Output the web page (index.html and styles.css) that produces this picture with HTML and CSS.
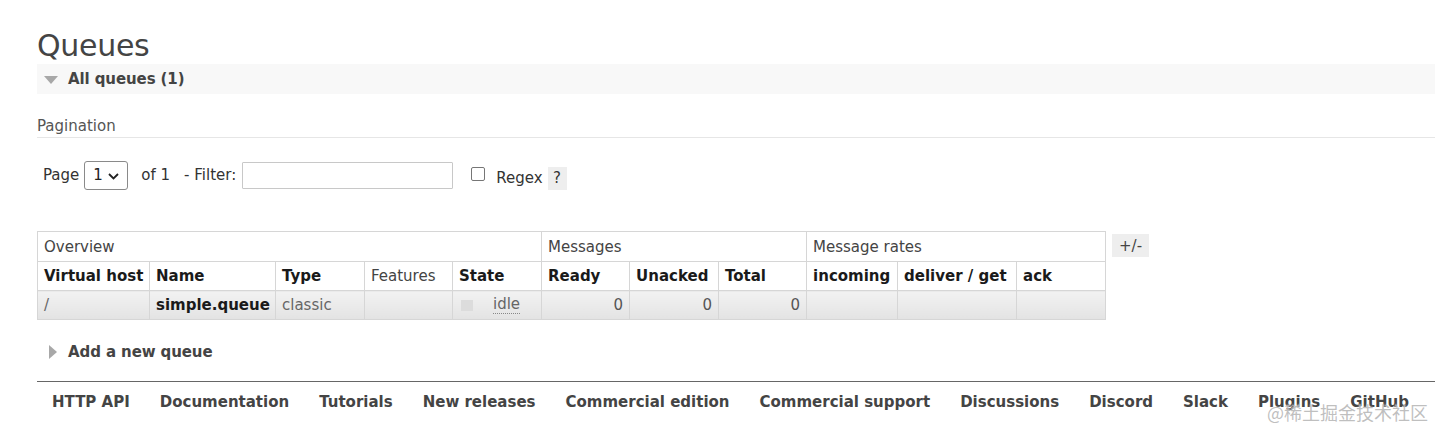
FILE: index.html
```html
<!DOCTYPE html>
<html>
<head>
<meta charset="utf-8">
<link rel="stylesheet" href="styles.css">
</head>
<body>
<div class="main">
  <h1 class="title">Queues</h1>
  <div class="section-bar">
    <span class="tri-down"></span>
    <h2 class="section-title">All queues (1)</h2>
  </div>

  <h3 class="sub-title">Pagination</h3>
  <div class="pager">
    <span class="lbl">Page</span>
    <span class="select-wrap">
      <select class="page-select"><option>1</option></select>
      <svg class="chev" width="11" height="7" viewBox="0 0 11 7"><path d="M1 1 L5.5 5.5 L10 1" fill="none" stroke="#222" stroke-width="1.8"/></svg>
    </span>
    <span class="of">of 1</span>
    <span class="flt">- Filter:</span>
    <input class="filter" type="text">
    <input class="chk" type="checkbox">
    <span class="regex">Regex</span>
    <span class="help">?</span>
  </div>

  <div class="table-row">
    <table class="list">
      <colgroup>
        <col class="c-vh"><col class="c-name"><col class="c-type"><col class="c-feat"><col class="c-state">
        <col class="c-ready"><col class="c-unack"><col class="c-total">
        <col class="c-inc"><col class="c-del"><col class="c-ack">
      </colgroup>
      <thead>
        <tr class="group">
          <th colspan="5">Overview</th>
          <th colspan="3">Messages</th>
          <th colspan="3">Message rates</th>
        </tr>
        <tr class="heads">
          <th class="b">Virtual host</th>
          <th class="b">Name</th>
          <th class="b">Type</th>
          <th>Features</th>
          <th class="b">State</th>
          <th class="b">Ready</th>
          <th class="b">Unacked</th>
          <th class="b">Total</th>
          <th class="b">incoming</th>
          <th class="b">deliver / get</th>
          <th class="b">ack</th>
        </tr>
      </thead>
      <tbody>
        <tr class="alt">
          <td>/</td>
          <td class="qname">simple.queue</td>
          <td>classic</td>
          <td></td>
          <td><span class="state"><span class="sq"></span><abbr class="idle">idle</abbr></span></td>
          <td class="num">0</td>
          <td class="num">0</td>
          <td class="num">0</td>
          <td></td>
          <td></td>
          <td></td>
        </tr>
      </tbody>
    </table>
    <span class="pm">+/-</span>
  </div>

  <div class="add-row">
    <span class="tri-right"></span>
    <h2 class="section-title">Add a new queue</h2>
  </div>

  <div class="footer">
    <a>HTTP API</a>
    <a>Documentation</a>
    <a>Tutorials</a>
    <a>New releases</a>
    <a>Commercial edition</a>
    <a>Commercial support</a>
    <a>Discussions</a>
    <a>Discord</a>
    <a>Slack</a>
    <a>Plugins</a>
    <a>GitHub</a>
  </div>
</div>
<div class="watermark">@稀土掘金技术社区</div>
</body>
</html>
```

FILE: styles.css
```css
html, body {
  margin: 0;
  padding: 0;
  background: #fff;
}
body {
  font-family: "DejaVu Sans", Verdana, sans-serif;
  font-size: 15px;
  color: #444;
  overflow: hidden;
  position: relative;
  height: 430px;
}
.main {
  margin-left: 37px;
  padding-top: 28px;
}
.title {
  margin: 0;
  font-size: 30px;
  font-weight: normal;
  line-height: 36px;
  color: #444;
  letter-spacing: -0.3px;
}
.section-bar {
  height: 30px;
  background: #f8f8f8;
  display: flex;
  align-items: center;
}
.tri-down {
  width: 0;
  height: 0;
  margin-left: 7px;
  border-left: 7px solid transparent;
  border-right: 7px solid transparent;
  border-top: 8px solid #a8a8a8;
  margin-top: 1px;
}
.section-title {
  margin: 0 0 0 10px;
  font-size: 15px;
  font-weight: bold;
  color: #444;
  letter-spacing: -0.1px;
}
.sub-title {
  margin: 21px 0 0 0;
  font-size: 15px;
  font-weight: normal;
  line-height: 22px;
  color: #555;
  border-bottom: 1px solid #e6e6e6;
}
.pager {
  margin-top: 22px;
  height: 30px;
  display: flex;
  align-items: center;
  color: #333;
}
.lbl {
  margin-left: 6px;
}
.select-wrap {
  position: relative;
  margin-left: 5px;
  display: inline-block;
}
.page-select {
  appearance: none;
  -webkit-appearance: none;
  width: 44px;
  height: 29px;
  border: 1px solid #8a8a8a;
  border-radius: 3px;
  background: #fff;
  font-family: inherit;
  font-size: 15px;
  color: #222;
  padding: 0 0 0 8px;
  margin: 0;
  display: block;
}
.chev {
  position: absolute;
  left: 24px;
  top: 12px;
  pointer-events: none;
}
.of {
  margin-left: 13px;
}
.flt {
  margin-left: 14px;
}
.filter {
  margin: 0 0 0 6px;
  width: 211px;
  height: 27px;
  box-sizing: border-box;
  border: 1px solid #c8c8c8;
  border-radius: 1px;
  padding: 0 4px;
  font-family: inherit;
  font-size: 15px;
}
.chk {
  appearance: none;
  -webkit-appearance: none;
  margin: 0 0 2px 18px;
  width: 14px;
  height: 14px;
  border: 1px solid #767676;
  border-radius: 2px;
  background: #fff;
}
.regex {
  margin-left: 11px;
  margin-top: 6px;
}
.help {
  margin-left: 5px;
  margin-top: 6px;
  width: 19px;
  height: 23px;
  background: #eee;
  color: #333;
  display: flex;
  align-items: center;
  justify-content: center;
}
.table-row {
  margin-top: 41px;
  display: flex;
  align-items: flex-start;
}
.list {
  border-collapse: collapse;
  table-layout: fixed;
  width: 1068px;
  font-size: 15px;
}
.c-vh { width: 112px; }
.c-name { width: 126px; }
.c-type { width: 89px; }
.c-feat { width: 88px; }
.c-state { width: 89px; }
.c-ready { width: 88px; }
.c-unack { width: 89px; }
.c-total { width: 88px; }
.c-inc { width: 91px; }
.c-del { width: 119px; }
.c-ack { width: 89px; }
.list th, .list td {
  border: 1px solid #d6d6d6;
  padding: 0 6px;
  text-align: left;
  white-space: nowrap;
  overflow: hidden;
}
.list th {
  font-weight: normal;
  color: #444;
  background: #fff;
}
.list th.b {
  font-weight: bold;
  color: #1a1a1a;
}
.group {
  height: 30px;
}
.heads {
  height: 29px;
}
.alt {
  height: 29px;
}
.alt td {
  background: linear-gradient(#f2f2f2, #e3e3e3);
  color: #666;
}
.alt td.qname {
  font-weight: bold;
  color: #1a1a1a;
}
.alt td.num {
  text-align: right;
  color: #555;
}
.state {
  display: flex;
  align-items: center;
}
.sq {
  width: 12px;
  height: 11px;
  background: #dcdcdc;
  margin-left: 2px;
  margin-right: 20px;
}
.idle {
  text-decoration: none;
  border-bottom: 1px dotted #888;
  line-height: 17px;
  color: #666;
}
.pm {
  margin-left: 6px;
  margin-top: 3px;
  width: 37px;
  height: 23px;
  background: #eee;
  color: #444;
  display: flex;
  align-items: center;
  justify-content: center;
}
.add-row {
  margin-top: 22px;
  height: 20px;
  display: flex;
  align-items: center;
}
.tri-right {
  width: 0;
  height: 0;
  margin-left: 12px;
  border-top: 7px solid transparent;
  border-bottom: 7px solid transparent;
  border-left: 8px solid #a8a8a8;
}
.add-row .section-title {
  margin-left: 11px;
}
.footer {
  margin-top: 19px;
  border-top: 1px solid #666;
  height: 40px;
  display: flex;
  align-items: center;
}
.footer a {
  padding: 0 15px;
  font-weight: bold;
  color: #444;
  text-decoration: none;
  white-space: nowrap;
}
.watermark {
  position: absolute;
  right: 7px;
  top: 400px;
  font-family: "Noto Sans CJK SC", sans-serif;
  font-size: 18px;
  line-height: 24px;
  color: rgba(170, 170, 170, 0.75);
  text-shadow: 0 0 2px #fff;
  pointer-events: none;
}
```
